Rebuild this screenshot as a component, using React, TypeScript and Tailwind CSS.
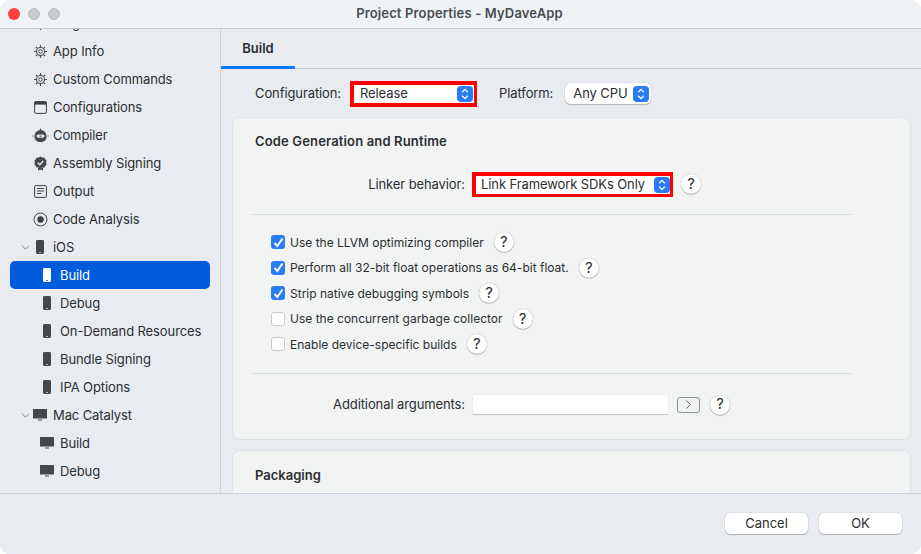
import React from 'react';
import { ChevronDown, ChevronRight } from 'lucide-react';

const GearIcon = () => (
  <svg width="15" height="15" viewBox="0 0 15 15" fill="none" stroke="#4a4c4f">
    <circle cx="7.5" cy="7.5" r="4" strokeWidth="1.1" />
    <circle cx="7.5" cy="7.5" r="1.8" strokeWidth="1" />
    <path d="M7.5 1v2M7.5 12v2M1 7.5h2M12 7.5h2M2.9 2.9l1.4 1.4M10.7 10.7l1.4 1.4M2.9 12.1l1.4-1.4M10.7 4.3l1.4-1.4" strokeWidth="1.2" />
  </svg>
);

const WindowIcon = () => (
  <svg width="13" height="13" viewBox="0 0 13 13" fill="none">
    <rect x="0.6" y="0.6" width="11.8" height="11.8" rx="1.2" stroke="#3c3e41" strokeWidth="1" />
    <rect x="0.6" y="0.6" width="11.8" height="3" fill="#3c3e41" />
  </svg>
);

const RobotIcon = () => (
  <svg width="17" height="15" viewBox="0 0 17 15" fill="none">
    <circle cx="8.5" cy="1.2" r="0.8" fill="#45474a" />
    <path d="M2.5 8a6 6 0 0 1 12 0v1a5 5 0 0 1-5 5h-2a5 5 0 0 1-5-5z" fill="#45474a" />
    <rect x="4.5" y="6.4" width="8" height="3.4" rx="1.7" fill="#e8ecf0" />
    <path d="M7.6 8.1h1.8" stroke="#45474a" strokeWidth="1.2" />
    <path d="M0.3 8h1.2M15.5 8h1.2" stroke="#45474a" strokeWidth="1" />
  </svg>
);

const BadgeIcon = () => (
  <svg width="13" height="15" viewBox="0 0 13 15" fill="none">
    <path d="M6.5 0.5l1.7 1.1 2-.1 1 1.7 1.4 1.4-.5 2 .5 2-1.4 1.4-1 1.7-2-.1-1.7 1.1-1.7-1.1-2 .1-1-1.7L.4 8.6l.5-2-.5-2 1.4-1.4 1-1.7 2 .1z" fill="#45474a" />
    <path d="M3.8 6.7l2 2 3.4-3.7" stroke="#e8ecf0" strokeWidth="1.3" />
    <path d="M4 12v2.5l2.5-1 2.5 1V12" fill="#45474a" />
  </svg>
);

const OutputIcon = () => (
  <svg width="13" height="13" viewBox="0 0 13 13" fill="none" stroke="#3c3e41">
    <rect x="0.6" y="0.6" width="11.8" height="11.8" rx="1" strokeWidth="1" />
    <path d="M3 3.5h7M3 6h7M3 8.5h4.5" strokeWidth="1" />
  </svg>
);

const RadioIcon = () => (
  <svg width="15" height="15" viewBox="0 0 15 15" fill="none">
    <circle cx="7.5" cy="7.5" r="6.5" stroke="#4a4c4f" strokeWidth="1" />
    <circle cx="7.5" cy="7.5" r="3.2" fill="#3c3e41" />
  </svg>
);

const PhoneIcon = ({ selected }: { selected?: boolean }) => (
  <svg width="8" height="14" viewBox="0 0 8 14">
    <rect width="8" height="14" rx="1.4" fill={selected ? '#ffffff' : '#45474a'} />
    <rect x="3" y="12" width="2" height="0.8" fill={selected ? '#005cdc' : '#c8ccd0'} />
  </svg>
);

const MonitorIcon = () => (
  <svg width="14" height="12" viewBox="0 0 14 12">
    <rect width="14" height="9.5" rx="0.6" fill="#45474a" />
    <rect x="5" y="10.5" width="4" height="1" fill="#45474a" />
  </svg>
);

type Row = {
  label: string;
  icon: React.ReactNode;
  depth: 0 | 1;
  expander?: boolean;
  selected?: boolean;
};

const rows: Row[] = [
  { label: 'Target Framework', icon: <GearIcon />, depth: 0 },
  { label: 'App Info', icon: <GearIcon />, depth: 0 },
  { label: 'Custom Commands', icon: <GearIcon />, depth: 0 },
  { label: 'Configurations', icon: <WindowIcon />, depth: 0 },
  { label: 'Compiler', icon: <RobotIcon />, depth: 0 },
  { label: 'Assembly Signing', icon: <BadgeIcon />, depth: 0 },
  { label: 'Output', icon: <OutputIcon />, depth: 0 },
  { label: 'Code Analysis', icon: <RadioIcon />, depth: 0 },
  { label: 'iOS', icon: <PhoneIcon />, depth: 0, expander: true },
  { label: 'Build', icon: <PhoneIcon selected />, depth: 1, selected: true },
  { label: 'Debug', icon: <PhoneIcon />, depth: 1 },
  { label: 'On-Demand Resources', icon: <PhoneIcon />, depth: 1 },
  { label: 'Bundle Signing', icon: <PhoneIcon />, depth: 1 },
  { label: 'IPA Options', icon: <PhoneIcon />, depth: 1 },
  { label: 'Mac Catalyst', icon: <MonitorIcon />, depth: 0, expander: true },
  { label: 'Build', icon: <MonitorIcon />, depth: 1 },
  { label: 'Debug', icon: <MonitorIcon />, depth: 1 },
];

const options = [
  { label: 'Use the LLVM optimizing compiler', checked: true },
  { label: 'Perform all 32-bit float operations as 64-bit float.', checked: true },
  { label: 'Strip native debugging symbols', checked: true },
  { label: 'Use the concurrent garbage collector', checked: false },
  { label: 'Enable device-specific builds', checked: false },
];

const HelpButton = () => (
  <button className="w-5 h-5 shrink-0 rounded-full bg-white shadow-[0_0_1px_rgba(0,0,0,0.4),0_1px_1px_rgba(0,0,0,0.2)] flex items-center justify-center text-[15px] font-normal text-[#2b2d2f]">
    ?
  </button>
);

const Stepper = () => (
  <span className="w-4 h-4 shrink-0 rounded-[4px] bg-[#2a7bf6] flex flex-col items-center justify-center">
    <svg width="8" height="12" viewBox="0 0 8 12" fill="none" stroke="#ffffff" strokeWidth="1.3">
      <path d="M1.2 4.2L4 1.4l2.8 2.8M1.2 7.8L4 10.6l2.8-2.8" />
    </svg>
  </span>
);

const SidebarRow = ({ row }: { row: Row }) => (
  <div className={`h-7 flex items-center rounded-[5px] mx-2.5 shrink-0 ${row.selected ? 'bg-[#005cdc] text-white' : 'text-[#2c2e30]'}`}>
    <span className="w-5 shrink-0 flex justify-start pl-[9px]">
      {row.expander && <ChevronDown size={13} strokeWidth={1.4} className="shrink-0 text-[#6f7276]" />}
    </span>
    <span className={`w-5 shrink-0 flex justify-center ${row.depth === 1 ? 'ml-[7px]' : ''}`}>
      {row.icon}
    </span>
    <span className="ml-[3px] pt-[1px]">{row.label}</span>
  </div>
);

export default function App() {
  return (
    <div className="w-[921px] h-[554px] bg-white overflow-hidden font-['Inter','Liberation_Sans',sans-serif] text-[13px] tracking-[-0.1px] text-[#2c2e30]">
      <div className="w-full h-full rounded-[10px] overflow-hidden flex flex-col bg-[#e8ecf0]">
        {/* Title bar */}
        <div className="h-[29px] shrink-0 flex items-center bg-[#f0f3f6] border-b border-[#c3c6ca]">
          <div className="flex items-center gap-2 pl-2">
            <span className="w-3 h-3 rounded-full bg-[#fc4040]" />
            <span className="w-3 h-3 rounded-full bg-[#c9cccf] border border-[#b9bcc0]" />
            <span className="w-3 h-3 rounded-full bg-[#c9cccf] border border-[#b9bcc0]" />
          </div>
          <div className="flex-1 text-center font-semibold tracking-[0.15px] text-[#4a4d50] pr-[62px]">Project Properties - MyDaveApp</div>
        </div>

        <div className="flex-1 flex min-h-0">
          {/* Sidebar */}
          <div className="w-[221px] shrink-0 border-r border-[#cdd0d4] overflow-hidden flex flex-col">
            <div className="-mt-5 flex flex-col">
              {rows.map((row, i) => (
                <SidebarRow key={i} row={row} />
              ))}
            </div>
          </div>

          {/* Content */}
          <div className="flex-1 min-w-0 flex flex-col overflow-hidden">
            <div className="h-10 shrink-0 border-b border-[#cdd0d4] flex">
              <div className="w-[74px] h-10 border-b-[3px] border-[#0a7aff] flex items-center justify-center pt-[2px] font-semibold tracking-normal text-[#2c2e30]">
                Build
              </div>
            </div>

            <div className="h-[48px] shrink-0 flex items-center pl-[34px] pt-[1px]">
              <span className="pt-[1px]">Configuration:</span>
              <div className="ml-[9px] w-[127px] h-[26px] border-4 border-r-[3px] border-[#fe0000] bg-white flex items-center justify-between pl-[6px] pr-[1px]">
                <span>Release</span>
                <Stepper />
              </div>
              <span className="ml-[22px] pt-[1px]">Platform:</span>
              <div className="ml-[12px] w-[86px] h-[21px] rounded-[5px] bg-white shadow-[0_0_1px_rgba(0,0,0,0.4),0_1px_1px_rgba(0,0,0,0.2)] flex items-center justify-between pl-[8px] pr-[2px]">
                <span>Any CPU</span>
                <Stepper />
              </div>
            </div>

            <div className="pl-[11px] pr-[10px] flex flex-col gap-[10px]">
              <div className="h-[323px] shrink-0 rounded-[8px] bg-[#f2f4f4] border border-[#e0e3e5] flex flex-col">
                <div className="pl-[22px] pt-[14px] font-semibold tracking-[0.15px] text-[#2c2e30]">Code Generation and Runtime</div>
                <div className="mt-[20px] h-[25px] flex items-center">
                  <span className="w-[232px] text-right shrink-0 pt-[1px]">Linker behavior:</span>
                  <div className="ml-[7px] w-[201px] h-[25px] border-4 border-r-[3px] border-b-[3px] border-[#fe0000] bg-white flex items-center justify-between pl-[5px] pr-[0px]">
                    <span>Link Framework SDKs Only</span>
                    <Stepper />
                  </div>
                  <span className="ml-[8px]"><HelpButton /></span>
                </div>
                <div className="mt-[17px] ml-[18px] w-[600px] h-px bg-[#d9dcde]" />
                <div className="mt-[15px] pl-[38px] flex flex-col">
                  {options.map(option => (
                    <div key={option.label} className="h-[25.5px] flex items-center">
                      <span className={`w-[14px] h-[14px] shrink-0 rounded-[3px] flex items-center justify-center ${option.checked ? 'bg-[#2a7bf6]' : 'bg-white border border-[#c9cccf]'}`}>
                        {option.checked && (
                          <svg width="11" height="11" viewBox="0 0 11 11" fill="none" stroke="#ffffff" strokeWidth="2">
                            <path d="M1.5 6l2.8 3L9.5 1.5" />
                          </svg>
                        )}
                      </span>
                      <span className="ml-[5px] text-[12px] tracking-normal pt-[1px]">{option.label}</span>
                      <span className="ml-[10px]"><HelpButton /></span>
                    </div>
                  ))}
                </div>
                <div className="mt-[16px] ml-[18px] w-[600px] h-px bg-[#d9dcde]" />
                <div className="mt-[20px] h-[21px] flex items-center">
                  <span className="w-[232px] text-right shrink-0">Additional arguments:</span>
                  <div className="ml-[8px] w-[195px] h-[20px] bg-white border-b border-[#c5c8cb] shadow-[0_0_1px_rgba(0,0,0,0.15)]" />
                  <button className="ml-[9px] w-[23px] h-[16px] rounded-[3px] border border-[#8f9295] flex items-center justify-center">
                    <ChevronRight size={15} strokeWidth={1.2} className="text-[#2c2e30]" />
                  </button>
                  <span className="ml-[10px]"><HelpButton /></span>
                </div>
              </div>
              <div className="h-[80px] shrink-0 rounded-[8px] bg-[#f2f4f4] border border-[#e0e3e5] pl-[22px] pt-[15px] font-semibold tracking-normal text-[#2c2e30]">
                Packaging
              </div>
            </div>
          </div>
        </div>

        {/* Footer */}
        <div className="h-[61px] shrink-0 border-t border-[#cdd0d4] bg-[#e8ecf0] flex justify-end items-start gap-[11px] pt-[19px] pr-[19px]">
          <button className="w-[83px] h-[21px] rounded-[5px] bg-white tracking-normal shadow-[0_0_1px_rgba(0,0,0,0.4),0_1px_1px_rgba(0,0,0,0.2)]">Cancel</button>
          <button className="w-[83px] h-[21px] rounded-[5px] bg-white tracking-normal shadow-[0_0_1px_rgba(0,0,0,0.4),0_1px_1px_rgba(0,0,0,0.2)]">OK</button>
        </div>
      </div>
    </div>
  );
}
